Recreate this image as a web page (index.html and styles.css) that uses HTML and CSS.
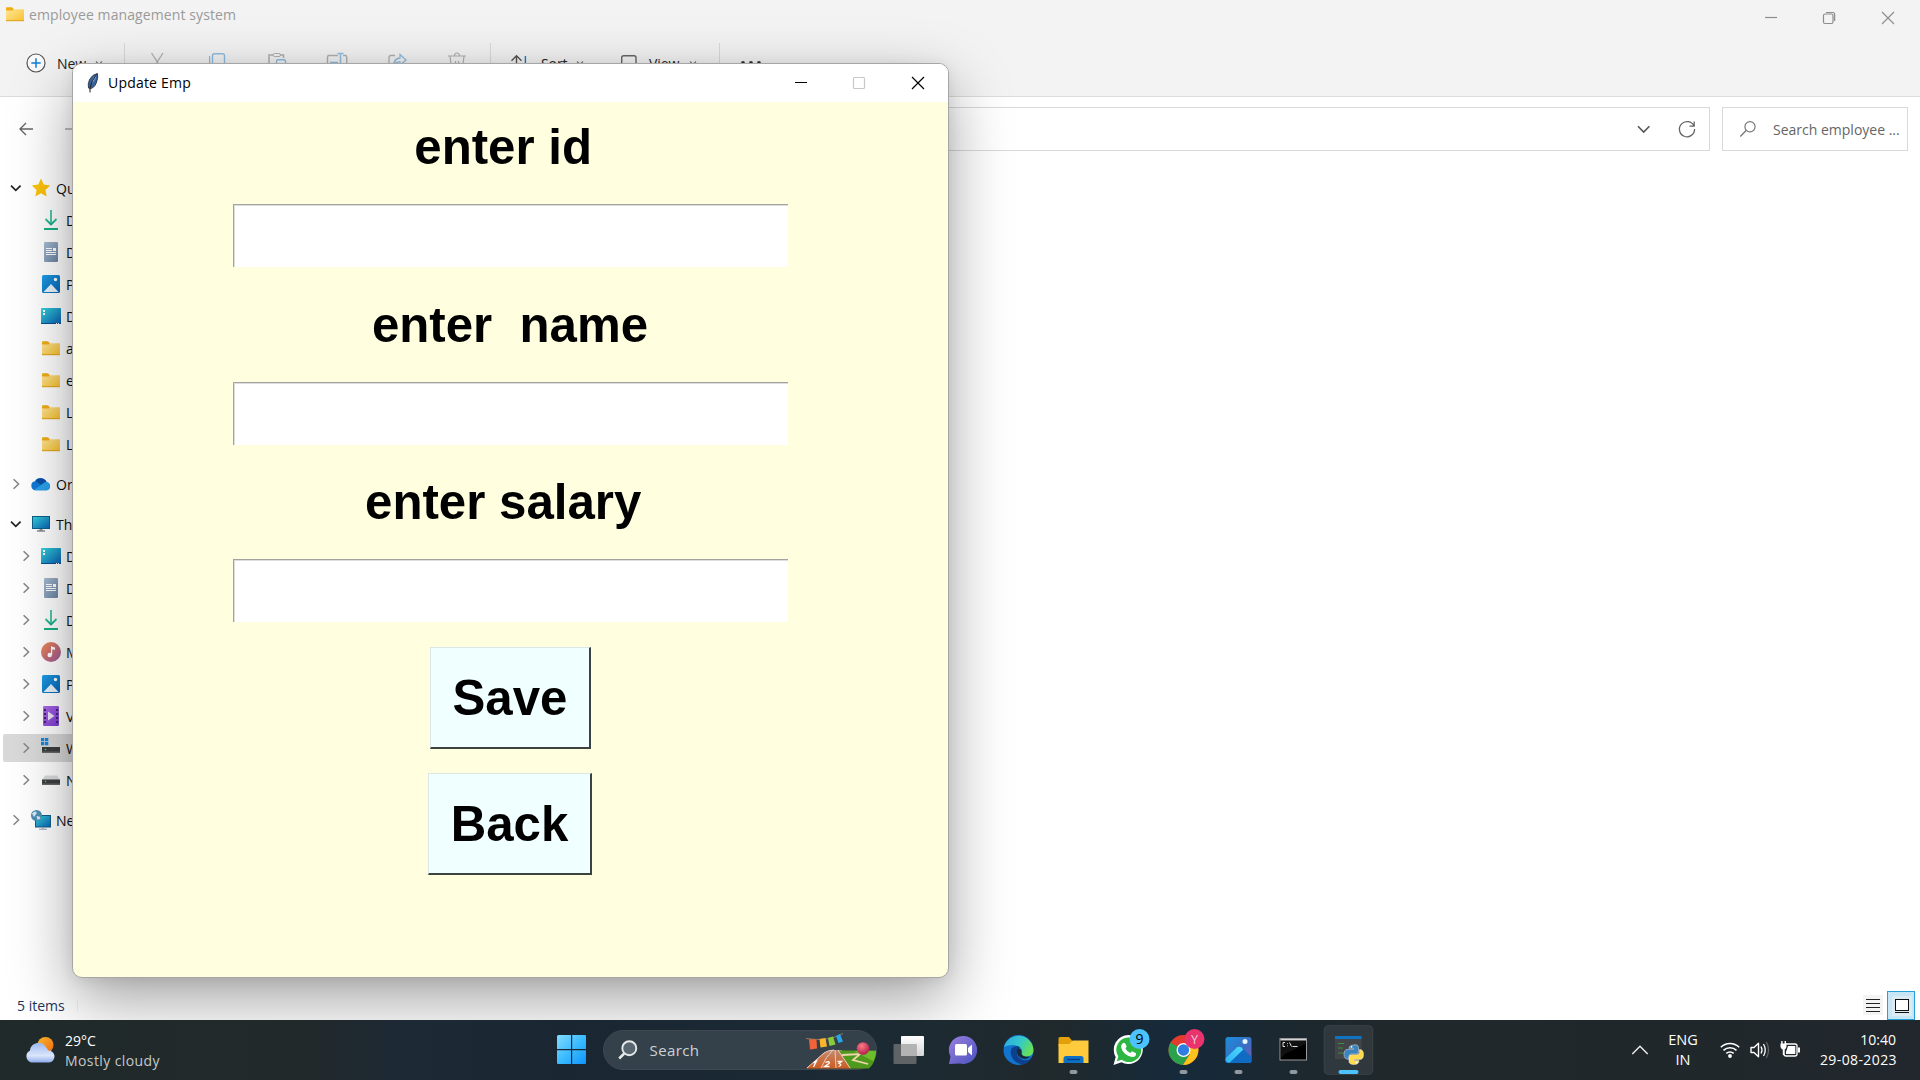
FILE: index.html
```html
<!DOCTYPE html>
<html lang="en">
<head>
<meta charset="utf-8">
<title>Update Emp</title>
<link rel="stylesheet" href="styles.css">
</head>
<body>
<svg class="defs" width="0" height="0">
  <defs>
    <linearGradient id="gFolder" x1="0" y1="0" x2="1" y2="1"><stop offset="0" stop-color="#ffe69a"/><stop offset="1" stop-color="#f9c22e"/></linearGradient>
    <linearGradient id="gTeal" x1="0" y1="0" x2="1" y2="1"><stop offset="0" stop-color="#35d6dc"/><stop offset="1" stop-color="#0a5fb4"/></linearGradient>
    <linearGradient id="gBlue" x1="0" y1="0" x2="1" y2="1"><stop offset="0" stop-color="#1f9fe8"/><stop offset="1" stop-color="#0763b6"/></linearGradient>
    <linearGradient id="gDoc" x1="0" y1="0" x2="1" y2="1"><stop offset="0" stop-color="#a9bdd3"/><stop offset="1" stop-color="#6b84a3"/></linearGradient>
    <linearGradient id="gDown" x1="0" y1="0" x2="0" y2="1"><stop offset="0" stop-color="#2fc58a"/><stop offset="1" stop-color="#0fa08e"/></linearGradient>
    <linearGradient id="gMusic" x1="0" y1="0" x2="1" y2="1"><stop offset="0" stop-color="#f58a4b"/><stop offset="1" stop-color="#9a559f"/></linearGradient>
    <linearGradient id="gVideo" x1="0" y1="0" x2="1" y2="1"><stop offset="0" stop-color="#b06be8"/><stop offset="1" stop-color="#7a3bd0"/></linearGradient>
    <linearGradient id="gStart" x1="0" y1="0" x2="1" y2="1"><stop offset="0" stop-color="#82dcff"/><stop offset=".5" stop-color="#3cbcff"/><stop offset="1" stop-color="#0f94fb"/></linearGradient>
    <linearGradient id="gChat" x1="0" y1="0" x2="1" y2="1"><stop offset="0" stop-color="#9a7fdc"/><stop offset="1" stop-color="#4a52c0"/></linearGradient>
    <linearGradient id="gEdgeTop" x1="0" y1="0" x2="1" y2=".4"><stop offset="0" stop-color="#2aa8e8"/><stop offset=".6" stop-color="#36c9c6"/><stop offset="1" stop-color="#64de5c"/></linearGradient>
    <linearGradient id="gSun" x1="0" y1="0" x2="1" y2="1"><stop offset="0" stop-color="#fbb62a"/><stop offset="1" stop-color="#ee6a12"/></linearGradient>
    <linearGradient id="gCloud" x1="0" y1="0" x2="0" y2="1"><stop offset="0" stop-color="#9db8ee"/><stop offset=".65" stop-color="#dbe6fb"/><stop offset="1" stop-color="#8fabea"/></linearGradient>
    <linearGradient id="gTrack" x1="0" y1="0" x2="0" y2="1"><stop offset="0" stop-color="#c08a72"/><stop offset="1" stop-color="#cf5b1e"/></linearGradient>
    <linearGradient id="gGray" x1="0" y1="0" x2="0" y2="1"><stop offset="0" stop-color="#ffffff"/><stop offset="1" stop-color="#d5d5d5"/></linearGradient>
    <linearGradient id="gPhoto" x1="0" y1="0" x2="1" y2="1"><stop offset="0" stop-color="#1b8ede"/><stop offset=".6" stop-color="#3d6bc0"/><stop offset="1" stop-color="#8a55b0"/></linearGradient>
    <linearGradient id="gHill" x1="1" y1="0" x2="0" y2="1"><stop offset="0" stop-color="#4fd8fb"/><stop offset="1" stop-color="#2fb4f4"/></linearGradient>
    <radialGradient id="gBall" cx=".4" cy=".3" r=".7"><stop offset="0" stop-color="#ff7b84"/><stop offset="1" stop-color="#b3204e"/></radialGradient>
    <symbol id="folder" viewBox="0 0 20 20"><path d="M1 4.2q0-1 1-1h5l1.600 1.700V8H1z" fill="#f0ad12"/><path d="M1 6.600h7L9.400 5.200H19V17H1z" fill="url(#gFolder)"/><path d="M1 16.200h18v1H1z" fill="#e0a01a"/></symbol>
    <symbol id="down" viewBox="0 0 20 20"><path d="M4.500 9l5.500 5.500L15.500 9" fill="none" stroke="url(#gDown)" stroke-width="1.800"/><path d="M3 18h14v2H3z" fill="#18b086"/><path d="M9.200 0h1.600v14H9.200z" fill="#22b890"/></symbol>
    <symbol id="doc" viewBox="0 0 20 20"><rect x="3" width="14" height="20" rx="1.300" fill="url(#gDoc)"/><path d="M5 6.500h6M5 8.500h6M5 10.500h10M5 12.500h10" stroke="#fff" stroke-width="1.100"/><path d="M12 6h3v3h-3z" fill="#fff"/></symbol>
    <symbol id="pic" viewBox="0 0 20 20"><rect x="1" y="1" width="18" height="18" rx="1.500" fill="url(#gBlue)"/><path d="M2.500 18 10 10l7.500 8z" fill="#eaf3fb"/><circle cx="14.500" cy="5.500" r="1.700" fill="#fff"/></symbol>
    <symbol id="desk" viewBox="0 0 20 20"><rect y="2" width="20" height="16" rx="1" fill="url(#gTeal)"/><path d="M2 4h2v2H2zM2 7h2v2H2z" fill="#fff"/><path d="M0 17h20v1H0z" fill="#0b4f8c"/><path d="M15 17.500h4" stroke="#fff" stroke-dasharray="1"/></symbol>
    <symbol id="star" viewBox="0 0 20 20"><path d="m10 .6 2.700 6 6.500.8-4.800 4.500 1.300 6.500L10 15.200l-5.700 3.200 1.300-6.500L.8 7.400l6.500-.8z" fill="#fcc30b"/></symbol>
    <symbol id="cloud" viewBox="0 0 20 20"><path d="M4.600 16.300A4.600 4.600 0 0 1 4 7.200 6.600 6.600 0 0 1 15.600 8 4.300 4.300 0 0 1 16 16.300z" fill="#0f78d4"/><path d="M4.500 6.800A6.600 6.600 0 0 1 15.600 8L10 11z" fill="#0a4fa5"/><path d="M3 16 12 9.500a5 5 0 0 1 3.600-1.400A4.300 4.300 0 0 1 16 16.300H4.600z" fill="#2ba0ea"/></symbol>
    <symbol id="pc" viewBox="0 0 20 20"><rect x="1.500" y="2.500" width="17" height="12" fill="url(#gTeal)" stroke="#0d5f86"/><path d="M8.500 15h3v1.500h-3z" fill="#8a8f96"/><path d="M6 16.500h8v1H6z" fill="#4d5257"/></symbol>
    <symbol id="music" viewBox="0 0 20 20"><circle cx="10" cy="10" r="10" fill="url(#gMusic)"/><circle cx="8.700" cy="13" r="2.200" fill="#fff"/><path d="M10 13V4.300l4 1.200v2.600l-2.800-.9V13z" fill="#fff"/></symbol>
    <symbol id="video" viewBox="0 0 20 20"><rect x="2" width="16" height="20" rx="1.200" fill="url(#gVideo)"/><path d="M4 3v16M16 3v16" stroke="#3f2470" stroke-width="2" stroke-dasharray="2 2"/><path d="m7 5.500 6.500 4.500L7 14.500z" fill="#efe4fb"/></symbol>
    <symbol id="drive" viewBox="0 0 20 20"><path d="M1 10 4 5.500h12L19 10z" fill="#d9dbdd"/><rect x="1" y="9.500" width="18" height="5.500" fill="#3c3e40"/><path d="M1 13.500h18V15H1z" fill="#66686a"/><circle cx="4.500" cy="11.500" r=".8" fill="#4ae04a"/></symbol>
    <symbol id="win" viewBox="0 0 20 20"><path d="M8 5.500h8l3 4.500H8z" fill="#d9dbdd"/><rect x="1" y="9" width="18" height="6" fill="#3c3e40"/><path d="M1 13.500h18V15H1z" fill="#66686a"/><circle cx="4.500" cy="11.500" r=".8" fill="#4ae04a"/><path d="M0 0h3.300v3.300H0zM4 0h3.300v3.300H4zM0 4h3.300v3.300H0zM4 4h3.300v3.300H4z" fill="#1489dd"/></symbol>
    <symbol id="net" viewBox="0 0 20 20"><rect x="4.500" y="5.500" width="15" height="11.500" fill="url(#gTeal)" stroke="#0d5f86"/><path d="M10.500 17h3v1.500h-3zM8 18.800h8v1H8z" fill="#9aa3c0"/><circle cx="5.500" cy="5.500" r="5.500" fill="#4e8fb5"/><path d="M1 3.500 4 1.200 6 3 3 7zM5.500 6l3 .5 1 2-3 1.500z" fill="#d5ebf3"/></symbol>
    <symbol id="chevR" viewBox="0 0 16 16"><path d="m5.600 3.200 5 4.800-5 4.800" fill="none" stroke="#858585" stroke-width="1.500"/></symbol>
    <symbol id="chevD" viewBox="0 0 16 16"><path d="m3 5.700 4.800 4.600 4.800-4.600" fill="none" stroke="#222" stroke-width="1.700"/></symbol>
    <symbol id="chevS" viewBox="0 0 8 8"><path d="m1 2.500 3 3 3-3" fill="none" stroke="#777" stroke-width="1.100"/></symbol>
  </defs>
</svg>

<div class="desktop">
  <section class="explorer">
    <header class="head">
      <div class="titlebar">
        <svg class="i20"><use href="#folder"/></svg>
        <span class="caption">employee management system</span>
        <svg class="winbtns" viewBox="0 0 180 36"><g fill="none" stroke="#8d8d8d" stroke-width="1.200"><path d="M25 17.500h12"/><rect x="83.500" y="14" width="9.500" height="9.500" rx="1.500"/><path d="M86 12.500h7q1.600 0 1.600 1.600v7"/><path d="m142 12 12 12M154 12l-12 12"/></g></svg>
      </div>
      <div class="toolbar">
        <svg class="plus" viewBox="0 0 20 20"><circle cx="10" cy="10" r="9" fill="#fafafa" stroke="#555" stroke-width="1.200"/><path d="M10 5.300v9.400M5.300 10h9.400" stroke="#0f7fd6" stroke-width="1.500"/></svg>
        <span class="tool new">New</span><svg class="i8"><use href="#chevS"/></svg>
        <i class="sep s1"></i>
        <svg class="slot" viewBox="0 0 60 66"><path d="m24.500 23 11 17M36 23 25 40" fill="none" stroke="#b0b0b0" stroke-width="1.300"/></svg>
        <svg class="slot" viewBox="0 0 60 66"><rect x="25.500" y="23.700" width="12" height="16" rx="2" fill="none" stroke="#8ebde2" stroke-width="1.400"/><path d="M22.600 26v14" stroke="#8ebde2" stroke-width="1.300"/></svg>
        <svg class="slot" viewBox="0 0 60 66"><path d="M26 25h-4v15M33 25h3.500v3" fill="none" stroke="#b0b0b0" stroke-width="1.500"/><rect x="26" y="23.500" width="7.500" height="3" rx="1.500" fill="none" stroke="#b0b0b0"/><rect x="29.500" y="29.700" width="9" height="10" rx="1.500" fill="none" stroke="#8ebde2" stroke-width="1.400"/></svg>
        <svg class="slot" viewBox="0 0 60 66"><path d="M31 25.500h-9q-1.500 0-1.500 1.500v12M36 25.500h2.500q1.200 0 1.200 1.500v12" fill="none" stroke="#b0b0b0" stroke-width="1.400"/><path d="M33.500 23.500v16M30.500 23.500h6M23 32.500h8" fill="none" stroke="#8ebde2" stroke-width="1.500"/></svg>
        <svg class="slot" viewBox="0 0 60 66"><path d="M28 25.500h-4q-2 0-2 2v12" fill="none" stroke="#b0b0b0" stroke-width="1.300"/><path d="M26 35q2-7 7-7v-3.500l6 5.500-6 5v-3q-4-.5-7 3z" fill="none" stroke="#8ebde2" stroke-width="1.300"/></svg>
        <svg class="slot" viewBox="0 0 60 66"><path d="M21 26h18M23 26l1.500 13M37 26l-1.500 13M27.500 26q0-3 2.500-3t2.500 3M28.500 31v8M31.500 31v8" fill="none" stroke="#b0b0b0" stroke-width="1.200"/></svg>
        <i class="sep s2"></i>
        <svg class="sort" viewBox="0 0 20 66"><path d="M7.500 40V26.200M2.500 30.800l5-5 5 5" fill="none" stroke="#555" stroke-width="1.400"/><path d="M16.400 26v14" stroke="#0f7fd6" stroke-width="1.400"/></svg>
        <span class="tool tsort">Sort</span><svg class="i8"><use href="#chevS"/></svg>
        <svg class="view" viewBox="0 0 18 66"><rect x="1.700" y="25.700" width="14.300" height="13" rx="2" fill="none" stroke="#666" stroke-width="1.400"/></svg>
        <span class="tool tview">View</span><svg class="i8"><use href="#chevS"/></svg>
        <i class="sep s3"></i>
        <svg class="dots" viewBox="0 0 22 66"><g fill="#333"><circle cx="3" cy="33" r="1.900"/><circle cx="11" cy="33" r="1.900"/><circle cx="19" cy="33" r="1.900"/></g></svg>
      </div>
    </header>
    <div class="nav">
      <svg class="arrows" viewBox="0 0 70 64"><path d="M14 32H1M7 26l-6 6 6 6" fill="none" stroke="#666" stroke-width="1.400"/><path d="M46 32h14M55 27l5 5-5 5" fill="none" stroke="#aaa" stroke-width="1.400"/></svg>
      <div class="address">
        <svg viewBox="0 0 60 24"><path d="m1 9.300 5.700 5.700 5.700-5.700" fill="none" stroke="#555" stroke-width="1.600"/><path d="M57 9.200a7.600 7.600 0 1 0 .6 2.800M57.200 4.500v4.700h-4.700" fill="none" stroke="#666" stroke-width="1.300"/></svg>
      </div>
      <div class="find">
        <svg viewBox="0 0 18 18"><circle cx="11" cy="6.700" r="5.100" fill="none" stroke="#777" stroke-width="1.200"/><path d="M7.300 10.300 1.300 16.500" stroke="#777" stroke-width="1.300"/></svg>
        <span>Search employee ...</span>
      </div>
    </div>
    <nav class="tree">
      <div class="row"><svg class="i16"><use href="#chevD"/></svg><svg class="i20"><use href="#star"/></svg>Quick access</div>
      <div class="row kid"><i class="i16"></i><svg class="i20"><use href="#down"/></svg>Downloads</div>
      <div class="row kid"><i class="i16"></i><svg class="i20"><use href="#doc"/></svg>Documents</div>
      <div class="row kid"><i class="i16"></i><svg class="i20"><use href="#pic"/></svg>Pictures</div>
      <div class="row kid"><i class="i16"></i><svg class="i20"><use href="#desk"/></svg>Desktop</div>
      <div class="row kid"><i class="i16"></i><svg class="i20"><use href="#folder"/></svg>a</div>
      <div class="row kid"><i class="i16"></i><svg class="i20"><use href="#folder"/></svg>e</div>
      <div class="row kid"><i class="i16"></i><svg class="i20"><use href="#folder"/></svg>L</div>
      <div class="row kid"><i class="i16"></i><svg class="i20"><use href="#folder"/></svg>L</div>
      <div class="row top"><svg class="i16"><use href="#chevR"/></svg><svg class="i20"><use href="#cloud"/></svg>OneDrive</div>
      <div class="row top"><svg class="i16"><use href="#chevD"/></svg><svg class="i20"><use href="#pc"/></svg>This PC</div>
      <div class="row kid"><svg class="i16"><use href="#chevR"/></svg><svg class="i20"><use href="#desk"/></svg>Desktop</div>
      <div class="row kid"><svg class="i16"><use href="#chevR"/></svg><svg class="i20"><use href="#doc"/></svg>Documents</div>
      <div class="row kid"><svg class="i16"><use href="#chevR"/></svg><svg class="i20"><use href="#down"/></svg>Downloads</div>
      <div class="row kid"><svg class="i16"><use href="#chevR"/></svg><svg class="i20"><use href="#music"/></svg>Music</div>
      <div class="row kid"><svg class="i16"><use href="#chevR"/></svg><svg class="i20"><use href="#pic"/></svg>Pictures</div>
      <div class="row kid"><svg class="i16"><use href="#chevR"/></svg><svg class="i20"><use href="#video"/></svg>Videos</div>
      <div class="row kid selected"><svg class="i16"><use href="#chevR"/></svg><svg class="i20"><use href="#win"/></svg>W</div>
      <div class="row kid"><svg class="i16"><use href="#chevR"/></svg><svg class="i20"><use href="#drive"/></svg>N</div>
      <div class="row top"><svg class="i16"><use href="#chevR"/></svg><svg class="i20"><use href="#net"/></svg>Network</div>
    </nav>
    <footer class="status">
      <span>5 items</span><i class="tick"></i>
      <svg class="modes" viewBox="0 0 54 30"><rect x="1" y="5" width="20" height="20" fill="#f4f4f4"/><path d="M4 9.500h14M4 13.500h14M4 17.500h14M4 21.500h14" stroke="#222" stroke-width="1"/><rect x="25.500" y="1.500" width="27" height="28" fill="#c6e6f5" stroke="#26a0da"/><rect x="30" y="6" width="20" height="20" fill="#dcebf3"/><rect x="33.500" y="9.500" width="13" height="11" fill="#fff" stroke="#111"/><path d="M33 22.500h14" stroke="#111"/></svg>
    </footer>
  </section>

  <section class="dialog">
    <div class="dlg-title">
      <svg class="feather" viewBox="0 0 14 20"><path d="M11.500.4Q6.500 1.300 3.500 6.500 1.500 11 2.500 15l1 .8Q8 15.500 10.300 10 12.500 4 11.500.4z" fill="#35619c" stroke="#222c3c" stroke-width=".8"/><path d="M10.500 1.500Q8 3 6.500 7L5 12Q8.500 8 9.800 5z" fill="#7fa6d8"/><path d="M10.500 1.500Q6 7 4 14.500V19.500" fill="none" stroke="#222" stroke-width="1"/></svg>
      <span>Update Emp</span>
      <svg class="dlgbtns" viewBox="0 0 160 38"><path d="M7 18.500h12" stroke="#000" stroke-width="1.200"/><rect x="65.500" y="13.500" width="11" height="11" rx="1" fill="none" stroke="#c8c8c8" stroke-width="1.200"/><path d="m124 13 12 12M136 13l-12 12" stroke="#000" stroke-width="1.200"/></svg>
    </div>
    <form class="form">
      <label for="eid">enter id </label><input id="eid" type="text">
      <label for="ename">enter  name</label><input id="ename" type="text">
      <label for="esal">enter salary </label><input id="esal" type="text">
      <button type="button" class="save">Save</button>
      <button type="button" class="back">Back</button>
    </form>
  </section>

  <div class="taskbar">
    <div class="weather">
      <svg viewBox="0 0 32 28"><circle cx="21.500" cy="9" r="8" fill="url(#gSun)"/><path d="M7 26.500a6.500 6.500 0 0 1-1-12 8.500 8.500 0 0 1 16-3 7 7 0 0 1 2 3 6 6 0 0 1 1 12z" fill="url(#gCloud)"/></svg>
      <div class="stack"><span>29°C</span><span class="dim">Mostly cloudy</span></div>
    </div>
    <svg class="start" viewBox="0 0 30 30"><path d="M1.500 0H14v14H0V1.500Q0 0 1.500 0zM15.200 0H28Q29 0 29 1v13H15.200zM0 15.200h14V29H1q-1 0-1-1zM15.200 15.200H29V28q0 1-1 1H15.200z" fill="url(#gStart)"/></svg>
    <div class="pill">
      <svg class="mag" viewBox="0 0 20 20"><circle cx="11.300" cy="8.200" r="7" fill="#59666f" stroke="#e6e9ea" stroke-width="1.900"/><path d="m6.200 13.500-5 5" stroke="#e6e9ea" stroke-width="2.500"/></svg>
      <span>Search</span>
      <svg class="art" viewBox="0 0 72 40">
        <path d="M0 38.500 17 23.500q4-3.500 11-3.500h8l9 18.500z" fill="url(#gTrack)"/>
        <path d="M33 20.500h37q0 12-7 18H44z" fill="#4f9a1c"/><path d="M48 21h22q0 6-3 10z" fill="#6cbf2a"/>
        <path d="M1 38 18 23q4-2.800 10-3M15 38q5-12 12-18M30 38l-1-18M44 38 32 20" fill="none" stroke="#eccdbd" stroke-width="1"/>
        <path d="M36 25l18-1-7 6 15 4" fill="none" stroke="#ecd6ac" stroke-width="1.800"/>
        <g fill="none" stroke="#fff" stroke-width="1.300"><path d="m7.500 33 3-2-3 6"/><path d="M19.500 32.500q5-2 3.500 1l-4.500 3h5"/><path d="M31.500 31.500h4l-2.500 2q4 1.500-.5 3"/></g>
        <path d="M0 8.500Q22 12 37 3.500" fill="none" stroke="#997a6a" stroke-width=".9"/>
        <path d="m3 9 7.500.5.500 9-7 1z" fill="#f06438"/><path d="m13.500 9 6-1 1.500 8.500-6.500 1z" fill="#fbb429"/><path d="m22 8 5-1.500 2.500 8-6 1.500z" fill="#8acb3c"/><path d="m30 6 4-2 3 7.500-4.500 1.500z" fill="#28a4e8"/>
        <circle cx="57" cy="18.500" r="6.300" fill="url(#gBall)"/>
      </svg>
    </div>
    <div class="apps">
      <svg viewBox="0 0 55 60"><rect x="20" y="16" width="23" height="20" rx="1" fill="url(#gGray)"/><rect x="12.500" y="24" width="23" height="20" rx="1" fill="#777" fill-opacity=".75"/><path d="M20 24h15.500v12H20z" fill="#b3b3b3"/></svg>
      <svg viewBox="0 0 55 60"><path d="M27.500 16a14 14 0 1 1-4 27.500L13 44l1.500-7.500A14 14 0 0 1 27.500 16z" fill="url(#gChat)"/><rect x="19" y="24" width="12" height="11.500" rx="1.500" fill="#fff"/><path d="m32 28 4-3.500v11L32 32z" fill="#fff"/></svg>
      <svg viewBox="0 0 55 60"><circle cx="27.500" cy="30" r="15" fill="#1274cf"/><path d="M13 27A15 15 0 0 1 42.500 30q0 6.500-7 6.500-6 0-4.500-4 .8-3.500-2.500-5.500-7-4-15.500 0z" fill="url(#gEdgeTop)"/><path d="M27 26q-9 0-7 9 3 9 13 9.500 4-1.500 7-5.500-4 2-8 1-6-2-6-8 0-3 3-4.500z" fill="#0d418d"/><path d="M27 28q3.500 1 3.600 4-1 4 4.900 4.700h4q-7 5-12-.7-3-4-.5-8z" fill="#182a39"/></svg>
      <svg viewBox="0 0 55 60"><path d="M12.500 18.500q0-1.500 1.500-1.500h9l3 3.500V26H12.500z" fill="#e3a008"/><path d="M12.500 24h11l3-3.500h16V43h-30z" fill="#ffcb3d"/><path d="M17.500 43v-4.500q0-2.500 2.500-2.500h15q2.500 0 2.500 2.500V43z" fill="#0f6fc3"/><path d="M21 39.500h13" stroke="#063f80" stroke-width="1.300"/><rect x="23.500" y="50" width="8" height="4" rx="2" fill="#92999e"/></svg>
      <svg viewBox="0 0 55 60"><path d="M27.500 15a14.500 14.500 0 1 1-7 27.300L12.500 45l2.200-8A14.700 14.700 0 0 1 27.500 15z" fill="#fff"/><path d="M27.300 17.500a12.300 12.300 0 1 1-6.500 22.200l-5 1.500 1.500-4.700A12.300 12.300 0 0 1 27.300 17.500z" fill="#2db742"/><path d="M21.500 23.500q1.500-1.800 3 .5l1.200 2.500-1.300 2q1.600 3 4.800 4.500l1.800-1.800 4 2q.5 4-4 3.800-9-2-11-10-.1-2 1.500-3.500z" fill="#fff"/><circle cx="38.500" cy="19" r="10" fill="#4cc2ff"/><text class="badge" x="38.500" y="24.200" fill="#000" font-size="14">9</text></svg>
      <svg viewBox="0 0 55 60"><circle cx="27.500" cy="30" r="15" fill="#e33b2e"/><path d="M27.500 30 14.500 22.500A15 15 0 0 0 27 45l7-12z" fill="#2ba14b"/><path d="M27.500 30 34 34 27 45A15 15 0 0 0 41.500 25h-14z" fill="#fcc31e"/><circle cx="27.500" cy="30" r="7" fill="#fff"/><circle cx="27.500" cy="30" r="5.700" fill="#2f7de1"/><circle cx="38.500" cy="19" r="10" fill="#e8336d"/><text class="badge" x="38.500" y="23.500" fill="#f3c9d8" font-size="12.500">Y</text><rect x="23.500" y="50" width="8" height="4" rx="2" fill="#92999e"/></svg>
      <svg viewBox="0 0 55 60"><rect x="14.500" y="17" width="26" height="26" rx="2.500" fill="url(#gPhoto)"/><path d="M15 37 26 27q2-1.800 4 0L40.500 37v4q0 2-2 2H17q-2.500 0-2.500-2.500z" fill="#0f6bc4"/><path d="M15.200 37.500 26 27.200q2-1.600 4 0l2.300 2.300L18.500 42.800q-4-.3-4-3.300z" fill="url(#gHill)"/><circle cx="34" cy="21.500" r="2.500" fill="#e8f4ff"/><rect x="23.500" y="50" width="8" height="4" rx="2" fill="#92999e"/></svg>
      <svg viewBox="0 0 55 60"><rect x="14" y="18.500" width="26.500" height="21.500" fill="#000" stroke="#9a9a9a"/><path d="M14.500 19h25.500v1.500H14.500z" fill="#d5d5d5"/><path d="m19 34 20.500-10v-3H14.500v18z" fill="#222" fill-opacity=".5"/><path d="M19 22.500h-2v4h2M21.500 23v.8M21.500 25.500v.8M23.500 22.500l2 4M26.500 26.500h5" fill="none" stroke="#ddd" stroke-width="1"/><rect x="23.500" y="50" width="8" height="4" rx="2" fill="#92999e"/></svg>
      <svg viewBox="0 0 55 60"><rect x="3" y="5.500" width="49" height="49" rx="4.500" fill="#fff" fill-opacity=".08" stroke="#fff" stroke-opacity=".07"/><rect x="14" y="17" width="26.500" height="22" fill="#424447"/><path d="M14 16h26.500v3H14z" fill="#0f73c0"/><path d="M17 23.500h6M17 28h5M17 33h6" stroke="#389045" stroke-width="1"/><path d="M32.500 25q5-1 5 2.500V32q0 2-2 2h-5q-2.500 0-2.500 2.500v2.800q-5 .5-5-5 0-5 4-5h5.500v-1H28q0-3 4.500-3.300z" fill="#3b84bd" stroke="#dfe3e6" stroke-width=".5"/><path d="M38.500 29.500q4 0 4 5t-4 5H33v1h5q0 4-5 4-5 0-5-3V37q0-2.200 2.500-2.200h5q3 0 3-2.800z" fill="#ffdb4c" stroke="#eee" stroke-width=".5"/><circle cx="30.500" cy="26.800" r=".9" fill="#fff"/><circle cx="35.500" cy="42.500" r=".9" fill="#fff"/><rect x="17.500" y="50" width="20" height="4" rx="2" fill="#4cc2ff"/></svg>
    </div>
    <div class="tray">
      <svg class="up" viewBox="0 0 18 12"><path d="m1.300 10 7.700-7.700 7.700 7.700" fill="none" stroke="#eee" stroke-width="1.400"/></svg>
      <div class="stack lang"><span>ENG</span><span>IN</span></div>
      <svg class="sys" viewBox="0 0 82 24">
        <g fill="none" stroke="#fff" stroke-width="1.500"><path d="M.8 9.200a13.200 13.200 0 0 1 18.400 0"/><path d="M3.500 12.400a9.300 9.300 0 0 1 13 0"/><path d="M6.300 15.400a5.300 5.300 0 0 1 7.400 0"/></g><circle cx="10" cy="18" r="1.900" fill="#fff"/>
        <path d="M31 9.500h3l4.500-4.200v13.400L34 14.500h-3z" fill="none" stroke="#fff" stroke-width="1.400" stroke-linejoin="round"/><path d="M41 8.500q2 3.500 0 7M43.500 6q3.500 6 0 12" fill="none" stroke="#fff" stroke-width="1.300"/><path d="M46.300 4q4.500 8 0 16" fill="none" stroke="#5d6366" stroke-width="1.300"/>
        <rect x="64" y="6" width="13" height="12" rx="2" fill="none" stroke="#fff" stroke-width="1.300"/><path d="M68 8h7.300v8H66v-2zM78 9.500h2v5h-2zM60.500 5.500h6V9q-1 3-3 3t-3-3zM61.200 3h1.400v3h-1.400zM64.600 3H66v3h-1.400zM62.800 11h1.400v6h-1.400z" fill="#fff"/>
      </svg>
      <div class="stack clock"><span>10:40</span><span class="date">29-08-2023</span></div>
    </div>
  </div>
</div>
</body>
</html>
```
FILE: styles.css
```css
* { box-sizing: border-box; }
body { margin: 0; font-family: "Open Sans", "Noto Sans", sans-serif; font-size: 14px; color: #111; }
svg { display: block; flex: none; }
.defs { position: absolute; }
.desktop { position: relative; width: 1920px; height: 1080px; overflow: hidden; display: flex; flex-direction: column; background: #fff; }

/* Explorer window */
.explorer { height: 1020px; display: flex; flex-direction: column; }
.head { height: 97px; background: #f3f3f3; border-bottom: 1px solid #dcdcdc; }
.titlebar { display: flex; height: 30px; padding-left: 5px; }
.titlebar .i20 { margin-top: 4px; }
.caption { flex: 1; margin-left: 4px; line-height: 29px; color: #9a9a9a; letter-spacing: .1px; }
.winbtns { width: 180px; height: 36px; }
.toolbar { display: flex; align-items: center; height: 66px; padding-left: 26px; }
.plus { width: 20px; height: 20px; }
.tool { white-space: nowrap; color: #222; letter-spacing: -.1px; }
.new { width: 38px; margin-left: 11px; }
.i8 { width: 8px; height: 8px; }
.sep { width: 1px; height: 40px; background: #dadada; }
.s1 { margin: 0 2px 0 21px; }
.slot { width: 60px; height: 66px; }
.s2 { margin-left: 3px; }
.sort { width: 20px; height: 66px; margin-left: 18px; }
.tsort { width: 35px; margin-left: 12px; }
.view { width: 18px; height: 66px; margin-left: 36px; }
.tview { width: 40px; margin-left: 11px; }
.s3 { margin-left: 22px; }
.dots { width: 22px; height: 66px; margin-left: 20px; }

.nav { display: flex; align-items: center; height: 64px; padding: 0 12px 0 19px; }
.arrows { width: 70px; height: 64px; }
.address { flex: 1; display: flex; align-items: center; justify-content: flex-end; height: 44px; margin-left: 60px; padding-right: 12px; border: 1px solid #d9d9d9; }
.address svg { width: 60px; height: 24px; }
.find { display: flex; align-items: center; width: 186px; height: 44px; margin-left: 12px; padding-left: 16px; border: 1px solid #d9d9d9; color: #666; white-space: nowrap; }
.find svg { width: 18px; height: 18px; margin-right: 16px; }

.tree { flex: 1; padding-top: 11px; width: 300px; }
.row { display: flex; align-items: center; height: 32px; padding-left: 8px; white-space: nowrap; }
.row .i20 { margin: 0 5px 0 7px; }
.kid { padding-left: 18px; }
.kid .i20 { margin-right: 5px; }
.top { margin-top: 8px; }
.selected { height: 28px; margin: 2px 0 2px 3px; padding-left: 15px; background: #d9d9d9; border-radius: 2px; }
.i16 { width: 16px; height: 16px; flex: none; }
.i20 { width: 20px; height: 20px; }

.status { display: flex; align-items: center; height: 30px; padding: 0 4px 0 17px; color: #1c355e; }
.tick { width: 1px; height: 12px; margin-left: 12px; background: #f2f2f2; }
.modes { width: 54px; height: 30px; margin-left: auto; }

/* Update Emp window floats over the explorer */
.dialog { position: absolute; left: 72px; top: 63px; width: 877px; height: 915px; border: 1px solid #a6a6a6; border-radius: 10px; overflow: hidden; background: #ffffe0; box-shadow: 0 22px 62px rgba(0,0,0,.37), 0 2px 14px rgba(0,0,0,.08); }
.dlg-title { display: flex; align-items: center; height: 38px; padding-left: 13px; background: #fff; color: #000; }
.feather { width: 14px; height: 20px; margin-right: 8px; }
.dlg-title span { padding-bottom: 2px; letter-spacing: .2px; }
.dlgbtns { width: 160px; height: 38px; margin-left: auto; }
.form { display: flex; flex-direction: column; align-items: center; height: 888px; margin-top: -13px; font: bold 49.200px "Liberation Sans", Arial, sans-serif; color: #000; clip-path: inset(13px 0 0 0); }
.form label { height: 115px; padding-right: 1px; line-height: 115px; white-space: pre; }
.form input { width: 555px; height: 63px; flex: none; padding: 0 8px; font: inherit; background: #fff; border: 0 solid; border-top: 1px solid #a2a2a2; border-left: 1px solid #a2a2a2; border-radius: 0; outline: none; box-shadow: inset 1px 1px 0 #dedede; }
.form input:not(:last-of-type) { margin-bottom: -.500px; }
.form button { height: 102px; flex: none; padding: 0; font: inherit; color: #000; background: #f0ffff; border: 1px solid #dce6e6; border-right: 2px solid #3c4141; border-bottom: 2px solid #3c4141; border-radius: 0; }
.save { width: 161px; margin-top: 25px; }
.back { width: 164px; margin: 24px 1px 0 0; }

/* Taskbar */
.taskbar { position: relative; display: flex; align-items: center; height: 60px; color: #fff; background: linear-gradient(90deg, #202a2b 0, #22292a 300px, #1d2935 400px, #1a2733 560px, #1b2a33 880px, #20292c 1060px, #152a3b 1180px, #1c282f 1290px, #20282b 1400px, #21272c 1920px); }
.stack { display: flex; flex-direction: column; line-height: 20px; white-space: nowrap; }
.dim { color: #c4c8c9; letter-spacing: .4px; }
.weather { display: flex; align-items: center; width: 557px; padding-left: 24px; }
.weather svg { width: 32px; height: 28px; margin-right: 9px; }
.weather .stack { padding-top: 2px; }
.start { width: 30px; height: 30px; }
.pill { display: flex; align-items: center; width: 274px; height: 40px; margin-left: 16px; padding-left: 13.500px; border: 1px solid #3d4850; border-radius: 20px; background: #35414a; }
.mag { width: 20px; height: 20px; }
.pill span { margin-left: 12px; font-size: 15px; color: #cdd2d5; letter-spacing: .4px; }
.art { width: 72px; height: 40px; margin-left: auto; margin-right: -1.500px; }
.apps { display: flex; margin-left: 3.500px; }
.apps svg { width: 55px; height: 60px; }
.badge { font-family: "Open Sans", sans-serif; text-anchor: middle; }
.tray { display: flex; align-items: center; margin-left: auto; padding-right: 24px; }
.up { width: 18px; height: 12px; }
.lang { width: 50px; margin-left: 9px; text-align: center; align-items: center; font-size: 14.500px; }
.sys { width: 82px; height: 24px; margin-left: 12px; }
.clock { width: 94px; text-align: right; align-items: flex-end; }
.date { letter-spacing: .4px; margin-right: -1px; }
```
